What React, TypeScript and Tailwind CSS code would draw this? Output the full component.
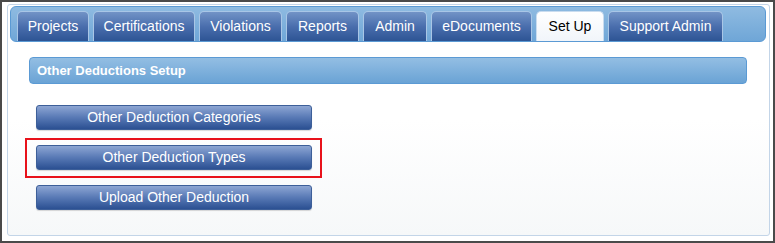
const tabs = [
  { label: "Projects", w: "w-[72px]" },
  { label: "Certifications", w: "w-[102px]" },
  { label: "Violations", w: "w-[83px]" },
  { label: "Reports", w: "w-[73px]" },
  { label: "Admin", w: "w-[64px]" },
  { label: "eDocuments", w: "w-[101px]" },
  { label: "Set Up", w: "w-[68px]", active: true },
  { label: "Support Admin", w: "w-[115px]" },
];

function SetupButton({ label }: { label: string }) {
  return (
    <button className="flex h-[25px] w-[276px] items-center justify-center rounded-[3px] border border-[#3d5f99] bg-gradient-to-b from-[#8ea6d3] via-[#5879b5] to-[#2b5092] text-[14px] text-white shadow-[0_1px_1px_rgba(0,0,0,0.15)]">
      {label}
    </button>
  );
}

export default function App() {
  return (
    <div className="box-border flex h-[243px] w-[775px] border-2 border-[#4a4a4a] bg-white font-['Liberation_Sans',Arial,sans-serif]">
      <div className="mt-[2px] mb-[5px] ml-[5px] mr-[3px] flex flex-1 flex-col rounded-[3px] border border-[#c3d5e8] bg-gradient-to-b from-white via-white to-[#f6f8f9] pt-[1px] pl-[2px] pr-[3px]">
        {/* Tab strip */}
        <div className="flex h-[36px] items-end gap-[4px] rounded-[6px] border border-[#5b9ad4] bg-gradient-to-b from-[#8fbbe1] to-[#6fa6d7] pl-[6px]">
          {tabs.map((t) =>
            t.active ? (
              <div
                key={t.label}
                className={`${t.w} flex h-[30px] items-center justify-center rounded-t-[5px] border border-b-0 border-[#c9dcef] bg-gradient-to-b from-white to-[#f1f5fa] text-[14px] text-black`}
              >
                {t.label}
              </div>
            ) : (
              <div
                key={t.label}
                className={`${t.w} flex h-[30px] items-center justify-center rounded-t-[5px] border border-b-0 border-[#a9c6e6] bg-gradient-to-b from-[#7293c6] via-[#4a6ead] to-[#2d5494] text-[14px] text-white`}
              >
                {t.label}
              </div>
            )
          )}
        </div>

        {/* Section header */}
        <div className="mt-[15px] ml-[19px] mr-[19px] flex h-[27px] items-center rounded-[4px] border border-[#5b9ad4] bg-gradient-to-b from-[#93bee3] to-[#6aa3d5] pl-[7px] text-[13px] font-bold text-white">
          Other Deductions Setup
        </div>

        {/* Buttons */}
        <div className="ml-[26px] mt-[21px]">
          <SetupButton label="Other Deduction Categories" />
        </div>
        <div className="ml-[15px] mt-[8px] w-[297px] border-2 border-[#e8121b] pt-[5px] pb-[6px] pl-[9px]">
          <SetupButton label="Other Deduction Types" />
        </div>
        <div className="ml-[26px] mt-[7px]">
          <SetupButton label="Upload Other Deduction" />
        </div>
      </div>
    </div>
  );
}
